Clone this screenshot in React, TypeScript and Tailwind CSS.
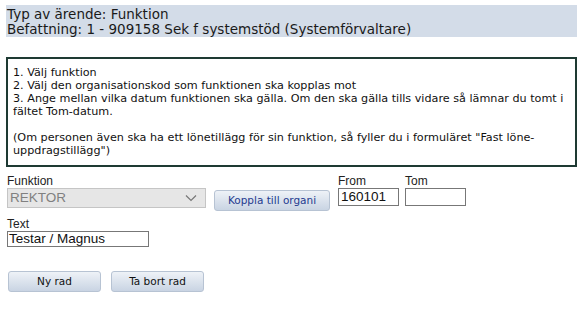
const verdana = "font-['Verdana','DejaVu_Sans',sans-serif]";
const arial = "font-['Liberation_Sans',Arial,sans-serif]";

function GrayButton({ label, className }: { label: string; className: string }) {
  return (
    <button
      className={`flex items-center justify-center rounded-[3px] border border-[#b7c3d3] bg-gradient-to-b from-[#eef2f7] to-[#c9d4e3] text-[10.5px] ${verdana} ${className}`}
    >
      {label}
    </button>
  );
}

export default function App() {
  return (
    <div className="h-[324px] w-[583px] bg-white pt-[5px]">
      <div className={`ml-[6px] h-[32px] w-[571px] bg-[#d3dce8] pl-[1px] pt-[2px] text-[13.5px] leading-[15px] text-[#1a1a1a] ${verdana}`}>
        <div>Typ av ärende:&nbsp;Funktion</div>
        <div>Befattning: 1 - 909158 Sek f systemstöd (Systemförvaltare)</div>
      </div>

      <div
        className={`ml-[6px] mt-[20px] h-[110px] w-[571px] border-2 border-[#1e3a33] px-[5px] pt-[7px] text-[11.2px] leading-[13px] text-[#111] ${verdana}`}
      >
        <div>1. Välj funktion</div>
        <div>2. Välj den organisationskod som funktionen ska kopplas mot</div>
        <div>
          3. Ange mellan vilka datum funktionen ska gälla. Om den ska gälla tills vidare så lämnar du tomt i fältet Tom-datum.
        </div>
        <div className="mt-[13px]">
          (Om personen även ska ha ett lönetillägg för sin funktion, så fyller du i formuläret "Fast löne-uppdragstillägg")
        </div>
      </div>

      <div className={`ml-[7px] mt-[8px] flex items-start ${arial}`}>
        <div className="flex flex-col">
          <span className="text-[12px] leading-[13px] text-[#222]">Funktion</span>
          <div className="flex h-[20px] w-[199px] items-center justify-between border border-[#c5c5c5] bg-[#e6e6e6] pl-[2px] pr-[8px] text-[13.5px] text-[#808080]">
            <span>REKTOR</span>
            <svg width="12" height="8" viewBox="0 0 12 8" fill="none">
              <path d="M1 1.5 L6 6.5 L11 1.5" stroke="#777" strokeWidth="1.2" />
            </svg>
          </div>
        </div>
        <GrayButton label="Koppla till organi" className="ml-[8px] mt-[15px] h-[21px] w-[116px] text-[#1f3b8f]" />
        <div className="ml-[8px] flex flex-col">
          <span className="text-[12px] leading-[13px] text-[#222]">From</span>
          <div className="flex h-[18px] w-[61px] items-center border border-[#777] pl-[2px] text-[13.5px] text-[#111]">
            160101
          </div>
        </div>
        <div className="ml-[6px] flex flex-col">
          <span className="text-[12px] leading-[13px] text-[#222]">Tom</span>
          <div className="h-[18px] w-[61px] border border-[#777]" />
        </div>
      </div>

      <div className={`ml-[7px] mt-[7px] flex flex-col ${arial}`}>
        <span className="text-[12px] leading-[13px] text-[#222]">Text</span>
        <div className="flex h-[16px] w-[142px] items-center border border-[#777] pl-[1px] text-[13.5px] text-[#111]">
          Testar / Magnus
        </div>
      </div>

      <div className="ml-[8px] mt-[24px] flex gap-[10px]">
        <GrayButton label="Ny rad" className="h-[21px] w-[93px] text-[#111]" />
        <GrayButton label="Ta bort rad" className="h-[21px] w-[93px] text-[#111]" />
      </div>
    </div>
  );
}
